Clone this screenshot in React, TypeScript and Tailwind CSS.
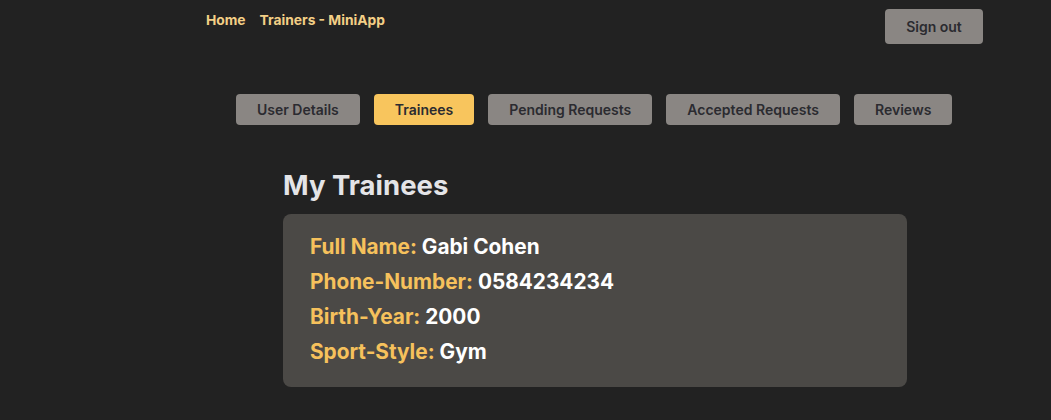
const tabs = ['User Details', 'Trainees', 'Pending Requests', 'Accepted Requests', 'Reviews'];

const trainee = [
  { label: 'Full Name:', value: 'Gabi Cohen' },
  { label: 'Phone-Number:', value: '0584234234' },
  { label: 'Birth-Year:', value: '2000' },
  { label: 'Sport-Style:', value: 'Gym' },
];

export default function App() {
  return (
    <div className="min-h-[420px] w-full bg-[#222222] font-['Inter',sans-serif]">
      <header className="flex items-start justify-between pl-[206px] pr-[68px] pt-[9px]">
        <nav className="flex gap-[14px] pt-[1px] text-[13.8px] font-bold text-[#f3cf86]">
          <a href="#">Home</a>
          <a href="#">Trainers - MiniApp</a>
        </nav>
        <button className="h-[35px] w-[98px] rounded-[4px] bg-[#8a8683] text-[14px] font-semibold text-[#2b2b30]">
          Sign out
        </button>
      </header>

      <div className="mt-[50px] flex gap-[14px] pl-[236px]">
        {tabs.map(t => (
          <button
            key={t}
            className={
              t === 'Trainees'
                ? 'h-[31px] rounded-[4px] bg-[#f8c55d] px-[21px] text-[14px] font-semibold text-[#2b2b30]'
                : 'h-[31px] rounded-[4px] bg-[#8a8683] px-[21px] text-[14px] font-semibold text-[#2b2b30]'
            }
          >
            {t}
          </button>
        ))}
      </div>

      <main className="ml-[283px] mt-[44px] w-[624px]">
        <h1 className="text-[27.5px] leading-[32px] font-bold text-[#e4e4e7]">My Trainees</h1>
        <div className="mt-[13px] h-[173px] rounded-[8px] bg-[#4b4946] px-[27px] pt-[19px]">
          {trainee.map(r => (
            <div key={r.label} className="h-[35px] text-[20.8px] leading-[28px] font-bold">
              <span className="text-[#f6c15c]">{r.label}</span>{' '}
              <span className="text-white">{r.value}</span>
            </div>
          ))}
        </div>
      </main>
    </div>
  );
}
